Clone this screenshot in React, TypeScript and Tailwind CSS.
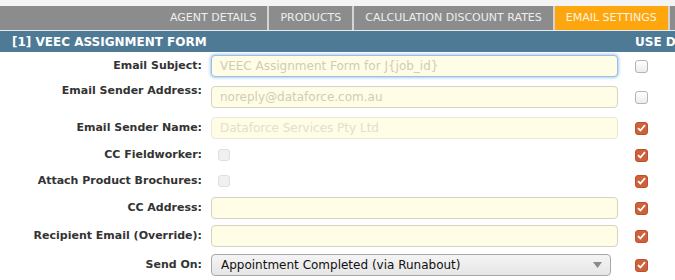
const font = { fontFamily: '"DejaVu Sans", Verdana, sans-serif' };

const tabs = ["AGENT DETAILS", "PRODUCTS", "CALCULATION DISCOUNT RATES", "EMAIL SETTINGS"];

function Check({ on }: { on: boolean }) {
  if (!on)
    return <span className="block w-[13px] h-[13px] rounded-[3px] border border-[#b4b4b4] bg-[linear-gradient(#ffffff,#ececec)]" />;
  return (
    <span className="flex items-center justify-center w-[13px] h-[13px] rounded-[3px] bg-[#d0603a] border border-[#b9522f]">
      <svg width="9" height="8" viewBox="0 0 9 8">
        <path d="M1 4.2 L3.4 6.5 L8 1.2" fill="none" stroke="#fff" strokeWidth="1.8" />
      </svg>
    </span>
  );
}

function Field({ value, variant }: { value?: string; variant?: "focus" | "faded" }) {
  const base = "w-[407px] h-[22px] rounded-[4px] px-[8px] flex items-center text-[12px] bg-[#fffde6] ";
  const border =
    variant === "focus"
      ? "border border-[#9ac0e6] shadow-[0_0_3px_1px_#a9cdf2]"
      : variant === "faded"
      ? "border border-[#ebe9d6] bg-[#fefef2]"
      : "border border-[#d6d4c0]";
  return (
    <div className={base + border}>
      <span className={variant === "faded" ? "text-[#e2e0c8]" : "text-[#cfcdb3]"}>{value}</span>
    </div>
  );
}

function Row({
  label,
  h,
  labelTop,
  children,
  on,
}: {
  label: string;
  h: number;
  labelTop?: boolean;
  children?: React.ReactNode;
  on: boolean;
}) {
  return (
    <div className="flex items-center" style={{ height: h }}>
      <div
        className={
          "w-[202px] text-right font-bold text-[11px] text-[#333] whitespace-nowrap " +
          (labelTop ? "self-start pt-[4px]" : "")
        }
      >
        {label}
      </div>
      <div className="w-[433px] pl-[9px]">{children}</div>
      <Check on={on} />
    </div>
  );
}

function Disabled() {
  return <span className="block ml-[7px] w-[12px] h-[12px] rounded-[3px] border border-[#dedede] bg-[#f0f0f0]" />;
}

export default function App() {
  return (
    <div className="w-[675px] h-[280px] overflow-hidden bg-white" style={font}>
      <div className="h-[6px] bg-[#f4f4f4]" />
      <div className="h-[24px] bg-[#8c8c8c] flex pl-[159px] whitespace-nowrap">
        {tabs.map((t) => (
          <div
            key={t}
            className={
              "h-full flex items-center px-[11px] text-[11px] border-r-2 border-[#d4d4d4] " +
              (t === "EMAIL SETTINGS" ? "bg-[#fda60d] text-[#fff4e0]" : "text-[#eeeeee]")
            }
          >
            {t}
          </div>
        ))}
      </div>
      <div className="h-[1px] bg-[#e6ecf0]" />
      <div className="h-[21px] bg-[#4e7a95] flex items-center text-white font-bold text-[12px] whitespace-nowrap overflow-hidden">
        <div className="w-[635px] shrink-0 pl-[12px]">[1] VEEC ASSIGNMENT FORM</div>
        <div>USE DEFAULT</div>
      </div>

      <div className="pt-[1px]">
        <Row label="Email Subject:" h={26} on={false}>
          <Field value="VEEC Assignment Form for J{job_id}" variant="focus" />
        </Row>
        <Row label="Email Sender Address:" h={36} labelTop on={false}>
          <Field value="noreply@dataforce.com.au" />
        </Row>
        <Row label="Email Sender Name:" h={26} on={true}>
          <Field value="Dataforce Services Pty Ltd" variant="faded" />
        </Row>
        <Row label="CC Fieldworker:" h={28} on={true}>
          <Disabled />
        </Row>
        <Row label="Attach Product Brochures:" h={24} on={true}>
          <Disabled />
        </Row>
        <Row label="CC Address:" h={30} on={true}>
          <Field />
        </Row>
        <Row label="Recipient Email (Override):" h={26} on={true}>
          <Field />
        </Row>
        <Row label="Send On:" h={32} on={true}>
          <div className="w-[400px] h-[22px] rounded-[4px] border border-[#a8a8a8] bg-[linear-gradient(#f4f4f4,#e6e6e6)] flex items-center pl-[9px] pr-[8px] text-[12px] text-[#111]">
            <span className="flex-1">Appointment Completed (via Runabout)</span>
            <svg width="9" height="6" viewBox="0 0 9 6">
              <path d="M0 0 H9 L4.5 6 Z" fill="#8a8a8a" />
            </svg>
          </div>
        </Row>
      </div>
    </div>
  );
}
